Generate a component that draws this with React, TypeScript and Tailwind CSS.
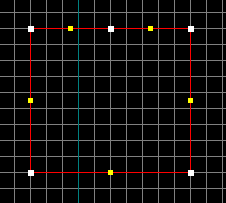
import React from "react"

const W = 226
const H = 203
const STEP = 16

const vLines = Array.from({ length: 14 }, (_, i) => 14 + i * STEP)
const hLines = Array.from({ length: 12 }, (_, i) => 12 + i * STEP)

const white: [number, number][] = [
  [30, 28],
  [110, 28],
  [190, 28],
  [30, 172],
  [190, 172],
]
const yellow: [number, number][] = [
  [70, 28],
  [150, 28],
  [30, 100],
  [190, 100],
  [110, 172],
]

export default function App() {
  return (
    <div className="w-[226px] h-[203px] bg-black overflow-hidden">
      <svg width={W} height={H} viewBox={`0 0 ${W} ${H}`} shapeRendering="crispEdges" className="block">
        {hLines.map((y) => (
          <line key={"h" + y} x1={0} y1={y + 0.5} x2={W} y2={y + 0.5} stroke="#808080" strokeWidth={1} />
        ))}
        {vLines.map((x) => (
          <line
            key={"v" + x}
            x1={x + 0.5}
            y1={0}
            x2={x + 0.5}
            y2={H}
            stroke={x === 78 ? "#008080" : "#808080"}
            strokeWidth={1}
          />
        ))}

        {/* selection box */}
        <rect x={30.5} y={28.5} width={160} height={144} fill="none" stroke="#ff0000" strokeWidth={1} />

        {white.map(([x, y]) => (
          <rect key={"w" + x + y} x={x - 2} y={y - 2} width={6} height={6} fill="#ffffff" />
        ))}
        {yellow.map(([x, y]) => (
          <rect key={"y" + x + y} x={x - 2} y={y - 2} width={5} height={5} fill="#ffff00" />
        ))}
      </svg>
    </div>
  )
}
